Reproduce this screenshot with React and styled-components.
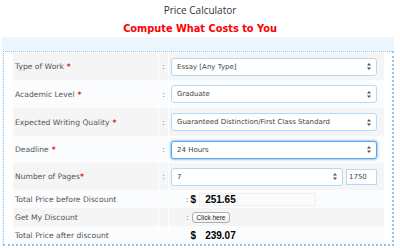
import React from 'react';
import styled, { createGlobalStyle } from 'styled-components';

const GlobalStyle = createGlobalStyle`
    body {
        margin: 0;
        background: #ffffff;
        font-family: "DejaVu Sans", Verdana, sans-serif;
    }
`;

const Page = styled.div`
    width: 400px;
    height: 252px;
    overflow: hidden;
`;

const Title = styled.div`
    text-align: center;
    font-family: "Open Sans", sans-serif;
    font-size: 10px;
    color: #333;
    line-height: 14px;
    padding-top: 3px;
`;

const Subtitle = styled.div`
    text-align: center;
    font-family: "DejaVu Sans", Verdana, sans-serif;
    font-weight: bold;
    font-size: 9.8px;
    color: #ff0000;
    line-height: 14px;
    margin-top: 5px;
`;

const Panel = styled.div`
    margin: 1px 6px 0 2px;
    padding-top: 14px;
    background: #eef6fd;
`;

const Box = styled.div`
    margin-left: 1px;
    border: 1px dotted #8ec6ee;
    border-right-width: 2px;
    border-bottom-width: 2px;
    background: #ffffff;
    padding: 1px 8px 0 9px;
`;

const Row = styled.div`
    display: grid;
    grid-template-columns: 145px 9px 1fr;
    column-gap: 1px;
    height: ${props => props.h}px;
    color: #555;
    font-size: 7.6px;

    & > div {
        background: ${props => props.shade ? '#f5f5f5' : '#fbfcfd'};
        display: flex;
        align-items: center;
    }
`;

const Label = styled.div`
    padding-left: 2px;
`;

const Star = styled.span`
    color: #e60000;
    font-weight: bold;
    margin-left: 3px;
    ${props => props.tight && `margin-left: 0;`}
`;

const Colon = styled.div`
    justify-content: center;
    color: #777;
`;

const Field = styled.div`
    padding: 0 7px 0 2px;
    gap: 3px;
`;

const Select = styled.div`
    flex: 1;
    height: 16px;
    border: 1px solid #b5daf6;
    border-radius: 3px;
    background: #fff;
    display: flex;
    align-items: center;
    justify-content: space-between;
    padding: 0 5px 0 5px;
    font-size: 7px;
    color: #444;

    ${props => props.focused && `
    border-color: #5fa4e6;
    box-shadow: 0 0 2px 1px #9fcbf3;
    `};
`;

const PagesInput = styled.div`
    width: 27px;
    height: 14px;
    border: 1px solid #b5daf6;
    background: #fff;
    font-size: 7px;
    color: #444;
    display: flex;
    align-items: center;
    padding-left: 2px;
`;

const TotalField = styled.div`
    padding-left: 17px;
    gap: 2px;
    color: #000;
`;

const Dollar = styled.span`
    font-family: "Liberation Sans", Arial, sans-serif;
    font-weight: bold;
    font-size: 10px;
    color: #000;
`;

const Amount = styled.span`
    width: 110px;
    height: 11px;
    border: 1px solid #efefef;
    margin-left: 1px;
    padding-left: 5px;
    display: flex;
    align-items: center;
    font-family: "Liberation Sans", Arial, sans-serif;
    font-weight: bold;
    font-size: 10px;
    color: #000;

    ${props => props.$plain && `border-color: transparent;`}
`;

const SmallColon = styled.span`
    color: #777;
    font-size: 7.6px;
    ${props => props.$blank && `visibility: hidden;`}
`;

const ClickButton = styled.span`
    margin-left: 1px;
    height: 9px;
    padding: 0 4px;
    border: 1px solid #b0b0b0;
    border-radius: 3px;
    background: linear-gradient(#ffffff, #f0f0f0);
    font-family: "Liberation Sans", Arial, sans-serif;
    font-size: 6.5px;
    color: #222;
    display: flex;
    align-items: center;
`;

const Arrows = () => (
    <svg width="4" height="7" viewBox="0 0 4 7">
        <path d="M2 0 L4 2.6 L0 2.6 Z" fill="#555" />
        <path d="M2 7 L4 4.4 L0 4.4 Z" fill="#555" />
    </svg>
);

const SelectRow = ({ label, value, shade, h, focused, tight }) => (
    <Row shade={shade} h={h}>
        <Label>{label}<Star tight={tight}>*</Star></Label>
        <Colon>:</Colon>
        <Field>
            <Select focused={focused}>
                <span>{value}</span>
                <Arrows />
            </Select>
        </Field>
    </Row>
);

const App = () => {
    return (
        <Page>
            <GlobalStyle />
            <Title>Price Calculator</Title>
            <Subtitle>Compute What Costs to You</Subtitle>
            <Panel>
                <Box>
                    <SelectRow label="Type of Work" value="Essay [Any Type]" shade h={27} />
                    <SelectRow label="Academic Level" value="Graduate" h={28} />
                    <SelectRow label="Expected Writing Quality" value="Guaranteed Distinction/First Class Standard" shade h={28} />
                    <SelectRow label="Deadline" value="24 Hours" h={27} focused />
                    <Row shade h={27}>
                        <Label>Number of Pages<Star tight>*</Star></Label>
                        <Colon>:</Colon>
                        <Field>
                            <Select>
                                <span>7</span>
                                <Arrows />
                            </Select>
                            <PagesInput>1750</PagesInput>
                        </Field>
                    </Row>
                    <Row h={18}>
                        <Label>Total Price before Discount</Label>
                        <Colon></Colon>
                        <TotalField>
                            <SmallColon>:</SmallColon>
                            <Dollar>$</Dollar>
                            <Amount>251.65</Amount>
                        </TotalField>
                    </Row>
                    <Row shade h={18}>
                        <Label>Get My Discount</Label>
                        <Colon></Colon>
                        <TotalField>
                            <SmallColon>:</SmallColon>
                            <ClickButton>Click here</ClickButton>
                        </TotalField>
                    </Row>
                    <Row h={18}>
                        <Label>Total Price after discount</Label>
                        <Colon></Colon>
                        <TotalField>
                            <SmallColon $blank>:</SmallColon>
                            <Dollar>$</Dollar>
                            <Amount $plain>239.07</Amount>
                        </TotalField>
                    </Row>
                </Box>
            </Panel>
        </Page>
    );
};

export default App;
